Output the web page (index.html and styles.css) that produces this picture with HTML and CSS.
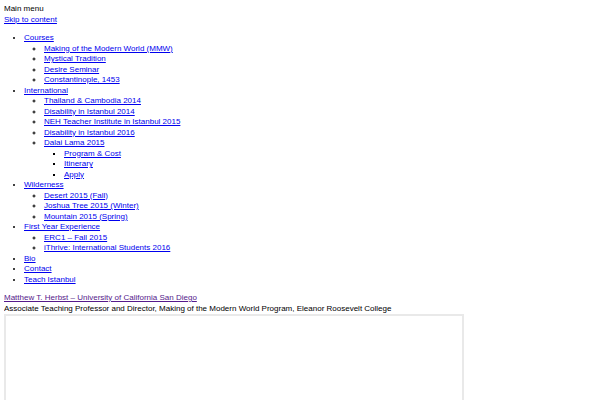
FILE: index.html
```html
<!DOCTYPE html>
<html>
<head>
<meta charset="utf-8">
<link rel="stylesheet" href="styles.css">
</head>
<body>
<div class="menu-toggle">Main menu</div>
<a class="skip" href="#content">Skip to content</a>
<ul class="nav">
  <li><a href="#">Courses</a>
    <ul>
      <li><a href="#">Making of the Modern World (MMW)</a></li>
      <li><a href="#">Mystical Tradition</a></li>
      <li><a href="#">Desire Seminar</a></li>
      <li><a href="#">Constantinople, 1453</a></li>
    </ul>
  </li>
  <li><a href="#">International</a>
    <ul>
      <li><a href="#">Thailand &amp; Cambodia 2014</a></li>
      <li><a href="#">Disability in Istanbul 2014</a></li>
      <li><a href="#">NEH Teacher Institute in Istanbul 2015</a></li>
      <li><a href="#">Disability in Istanbul 2016</a></li>
      <li><a href="#">Dalai Lama 2015</a>
        <ul>
          <li><a href="#">Program &amp; Cost</a></li>
          <li><a href="#">Itinerary</a></li>
          <li><a href="#">Apply</a></li>
        </ul>
      </li>
    </ul>
  </li>
  <li><a href="#">Wilderness</a>
    <ul>
      <li><a href="#">Desert 2015 (Fall)</a></li>
      <li><a href="#">Joshua Tree 2015 (Winter)</a></li>
      <li><a href="#">Mountain 2015 (Spring)</a></li>
    </ul>
  </li>
  <li><a href="#">First Year Experience</a>
    <ul>
      <li><a href="#">ERC1 – Fall 2015</a></li>
      <li><a href="#">iThrive: International Students 2016</a></li>
    </ul>
  </li>
  <li><a href="#">Bio</a></li>
  <li><a href="#">Contact</a></li>
  <li><a href="#">Teach Istanbul</a></li>
</ul>
<div class="site-title"><a class="visited" href="#">Matthew T. Herbst – University of California San Diego</a></div>
<div class="tagline">Associate Teaching Professor and Director, Making of the Modern World Program, Eleanor Roosevelt College</div>
<div class="frame" id="content"></div>
</body>
</html>
```
FILE: styles.css
```css
html, body {
  background: #ffffff;
}
body {
  margin: 4px;
  font-family: "Liberation Sans", Arial, sans-serif;
  font-size: 8px;
  line-height: 10.5px;
  color: #000000;
}
a {
  color: #0000ee;
  text-decoration: underline;
}
a.visited {
  color: #551a8b;
}
.skip {
  display: inline-block;
}
.nav {
  margin: 8px 0;
  padding-left: 20px;
  list-style: disc;
}
.nav ul {
  margin: 0;
  padding-left: 20px;
  list-style: circle;
}
.nav ul ul {
  list-style: square;
}
.frame {
  width: 456px;
  height: 200px;
  border: 2px solid #e9e9e9;
}
```
